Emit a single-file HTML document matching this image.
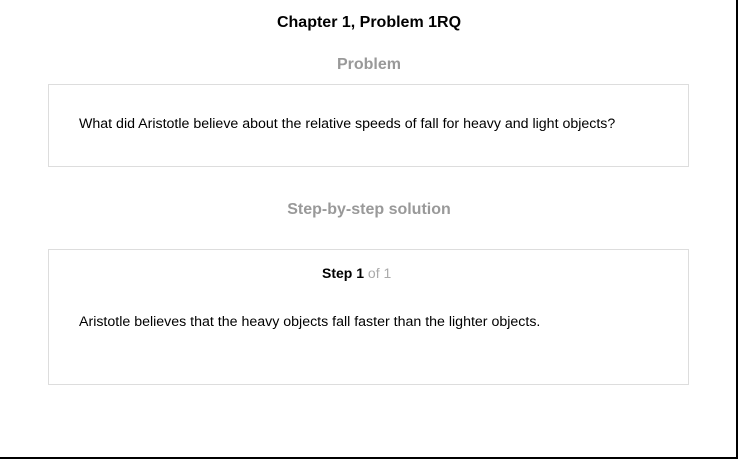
<!DOCTYPE html>
<html><head><style>
body{margin:0;width:738px;height:459px;position:relative;background:#fff;font-family:"Liberation Sans",sans-serif;overflow:hidden}
.frame{position:absolute;left:0;top:0;width:736px;height:457px;border-right:2px solid #000;border-bottom:2px solid #000}
.t{position:absolute;left:0;width:738px;text-align:center;font-weight:bold}
.box{position:absolute;left:48px;width:639px;border:1px solid #ddd;box-sizing:content-box}
.txt{position:absolute;left:79px;font-size:14.2px;color:#000;white-space:nowrap}
</style></head><body>
<div class="frame"></div>
<div class="t" style="top:14px;font-size:16px;color:#000">Chapter 1, Problem 1RQ</div>
<div class="t" style="top:56px;font-size:16px;color:#999">Problem</div>
<div class="box" style="top:84px;height:81px"></div>
<div class="txt" style="top:116px">What did Aristotle believe about the relative speeds of fall for heavy and light objects?</div>
<div class="t" style="top:201px;font-size:16px;color:#999">Step-by-step solution</div>
<div class="box" style="top:249px;height:134px"></div>
<div style="position:absolute;left:322px;top:265px;font-size:14px;font-weight:bold;color:#000;white-space:nowrap">Step 1 <span style="font-weight:normal;color:#aaa">of 1</span></div>
<div class="txt" style="top:314px">Aristotle believes that the heavy objects fall faster than the lighter objects.</div>
</body></html>
